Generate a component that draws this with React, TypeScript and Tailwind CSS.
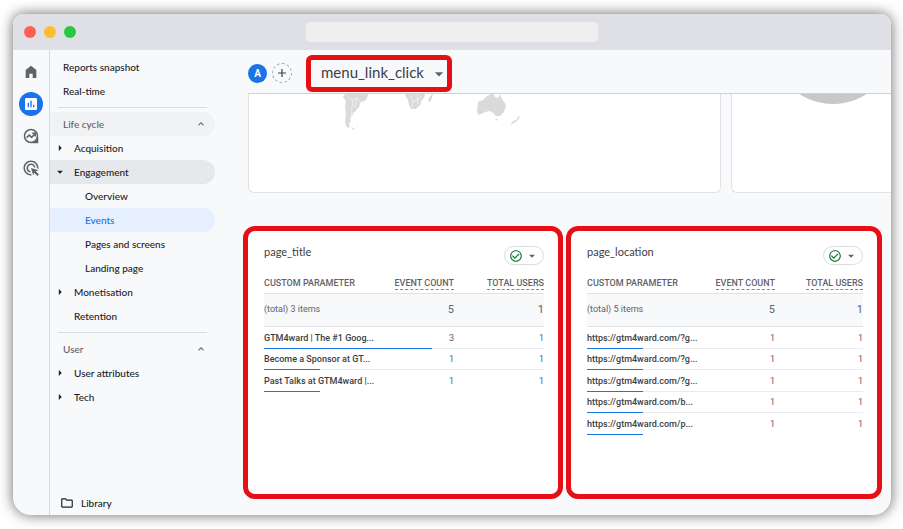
import { MdAdsClick, MdArrowDropDown, MdArrowRight, MdCheckCircleOutline, MdExpandLess, MdInsertChart, MdOutlineFolder } from "react-icons/md";

type Row = { label: string; count: number; users: number };

const lifeCycle = [
    { label: "Acquisition", kind: "closed" },
    { label: "Engagement", kind: "open" },
    { label: "Overview", kind: "child" },
    { label: "Events", kind: "active" },
    { label: "Pages and screens", kind: "child" },
    { label: "Landing page", kind: "child" },
    { label: "Monetisation", kind: "closed" },
    { label: "Retention", kind: "plain" },
];

const userItems = [
    { label: "User attributes", kind: "closed" },
    { label: "Tech", kind: "closed" },
];

const titleRows: Row[] = [
    { label: "GTM4ward | The #1 Goog...", count: 3, users: 1 },
    { label: "Become a Sponsor at GT...", count: 1, users: 1 },
    { label: "Past Talks at GTM4ward |...", count: 1, users: 1 },
];

const locationRows: Row[] = [
    { label: "https://gtm4ward.com/?g...", count: 1, users: 1 },
    { label: "https://gtm4ward.com/?g...", count: 1, users: 1 },
    { label: "https://gtm4ward.com/?g...", count: 1, users: 1 },
    { label: "https://gtm4ward.com/b...", count: 1, users: 1 },
    { label: "https://gtm4ward.com/p...", count: 1, users: 1 },
];

const rowStyles: Record<string, string> = {
    closed: "pl-6",
    open: "pl-6 bg-[#e6e8eb]",
    plain: "pl-6",
    child: "pl-[35px]",
    active: "pl-[35px] bg-[#e5effd] text-[#1a73e8]",
};

function NavItem({ label, kind }: { label: string; kind: string }) {
    return (
        <a href="#" className={`relative flex h-6 items-center rounded-r-full ${rowStyles[kind]}`}>
            {kind === "closed" && <MdArrowRight className="absolute left-[3px] size-3.5" />}
            {kind === "open" && <MdArrowDropDown className="absolute left-[3px] size-3.5" />}
            {label}
        </a>
    );
}

function NavGroup({ label, shaded, items }: { label: string; shaded?: boolean; items: { label: string; kind: string }[] }) {
    return (
        <div>
            <button className={`flex h-6 w-full items-center justify-between rounded-r-full pl-[13px] pr-2 text-[#5f6368] ${shaded ? "bg-[#f1f2f4]" : ""}`}>
                {label}
                <MdExpandLess className="size-3" />
            </button>
            {items.map((item) => (
                <NavItem key={item.label} {...item} />
            ))}
        </div>
    );
}

function Rail() {
    return (
        <nav aria-label="Main" className="flex w-[37px] shrink-0 flex-col items-center gap-2 border-r border-[#d5d7da] pt-2.5 text-[#5f6368]">
            <a href="#" aria-label="Home" className="flex size-6 items-center justify-center">
                <svg viewBox="0 0 24 24" className="size-4" fill="currentColor">
                    <path d="M4 21V9l8-6.5L20 9v12h-5.5v-6.5h-5V21z" />
                </svg>
            </a>
            <a href="#" aria-label="Reports" className="flex size-6 items-center justify-center rounded-full bg-[#1a73e8] text-white">
                <MdInsertChart className="size-4" />
            </a>
            <a href="#" aria-label="Explore" className="flex size-6 items-center justify-center">
                <svg viewBox="0 0 24 24" className="size-4" fill="none" stroke="currentColor" strokeWidth="2.3">
                    <circle cx="12" cy="12" r="9.8" />
                    <path d="M21.8 14v7.8H14c4-.6 7-3.600 7.800-7.800z" fill="currentColor" />
                    <path d="M5.500 14.500l4-4 3.500 3.500 5-5.500M13.800 8h4.600v4.600" />
                </svg>
            </a>
            <a href="#" aria-label="Advertising" className="flex size-6 items-center justify-center">
                <MdAdsClick className="size-[18px]" />
            </a>
        </nav>
    );
}

function Sidebar() {
    return (
        <nav aria-label="Reports" className="flex w-[165px] shrink-0 flex-col pt-[5px] font-['Lato',sans-serif] text-[10px] font-medium leading-3 text-[#202124]">
            <a href="#" className="flex h-6 items-center pl-[13px]">Reports snapshot</a>
            <a href="#" className="flex h-6 items-center pl-[13px]">Real-time</a>
            <hr className="mx-2 my-1 border-[#dadce0]" />
            <NavGroup label="Life cycle" shaded items={lifeCycle} />
            <hr className="mx-2 my-1 border-[#dadce0]" />
            <NavGroup label="User" items={userItems} />
            <a href="#" className="mt-auto flex h-6 items-center gap-[7px] pl-2.5">
                <MdOutlineFolder className="size-3.5" />
                Library
            </a>
        </nav>
    );
}

function WorldMap() {
    return (
        <svg viewBox="340 93 190 40" className="ml-[91px] h-10 w-[190px]" fill="#dadada" role="img" aria-label="World map">
            <path d="M345 93h23l-1 4-2 3-4 1-1 4-3 3-2 3-2 1-1 4-2 1 1 3-2 3 1 3-2 1-2-2-1-5 1-7-1-7 1-6-3-4z" />
            <path d="M351 126l4 2-2 1zM356 125l2-1v1z" />
            <path d="M405 93h20l-1 4-3 3v3l-3 3-2 2h-5l-2-4-1-5-2-3z" />
            <path d="M430 95l3-2-1 4-2 4-2-1z" />
            <path d="M478 101l5-2 4-4 4-2h3l1 3 3 1 2-4 2 5 3 4 1 3-2 6-4 4h-4l-3-3-3-2-5 1-4 2-3 1-1-5z" />
            <path d="M495 118h3l-1 2zM518 115l2 1-3 4-5 3-2 1 2-3 5-3zM516 100h1v1zM526 97h1v1zM442 122h1v1z" />
            <path d="M348 96l5 3 4-2 4 5-2 3M353 99l-1 8-1 14M357 97l-2 10M410 94l3 6 5-1 4-5M413 100l-1 6M417 93l1 10" fill="none" stroke="white" strokeWidth="0.6" />
        </svg>
    );
}

function ParameterCard({ title, rows }: { title: string; rows: Row[] }) {
    const total = rows.reduce((sum, row) => sum + row.count, 0);
    return (
        <section className="h-[273px] rounded-xl border-5 border-[#e60f14] bg-white pl-4 pr-3.5 pt-[15px]">
            <div className="flex h-[19px] items-start justify-between">
                <h2 className="font-['Lato',sans-serif] text-[11px] leading-3 text-[#3c4043]">{title}</h2>
                <button aria-label={`${title} data quality`} className="flex h-[19px] w-10 items-center justify-between rounded-full border border-[#dadce0] px-1">
                    <MdCheckCircleOutline className="size-3.5 text-[#137333]" />
                    <MdArrowDropDown className="size-3.5 text-[#5f6368]" />
                </button>
            </div>
            <table className="mt-2 w-full table-fixed border-separate border-spacing-0 text-[#5f6368]">
                <thead>
                    <tr className="h-[21px] text-[9px] leading-3 *:border-b *:border-[#dfe1e5]">
                        <th className="w-[100px] whitespace-nowrap p-0 text-left font-medium">CUSTOM PARAMETER</th>
                        <th className="p-0 text-right font-medium">
                            <span className="border-b border-dashed border-[#80868b] pb-px">EVENT COUNT</span>
                        </th>
                        <th className="p-0 text-right font-medium">
                            <span className="border-b border-dashed border-[#80868b] pb-px">TOTAL USERS</span>
                        </th>
                    </tr>
                </thead>
                <tbody>
                    <tr className="h-[33px] bg-[#f8f9fa] text-[11px] *:border-b *:border-[#dfe1e5]">
                        <td className="p-0 text-[9px]">(total) {rows.length} items</td>
                        <td className="p-0 text-right">{total}</td>
                        <td className="p-0 text-right">1</td>
                    </tr>
                    {rows.map((row, index) => (
                        <tr key={index} className="h-[21px] text-[9px] leading-3 *:border-b *:border-[#e8eaed] last:*:border-transparent even:h-[22px]">
                            <td className="relative whitespace-nowrap p-0 font-medium text-[#3c4043]">
                                {row.label}
                                <span
                                    className="absolute -bottom-px left-0 h-px bg-[#1a73e8]"
                                    style={{ width: row.count * 56 }}
                                />
                            </td>
                            <td className="p-0 text-right">{row.count}</td>
                            <td className="p-0 text-right">{row.users}</td>
                        </tr>
                    ))}
                </tbody>
            </table>
        </section>
    );
}

function Toolbar() {
    return (
        <header className="flex h-11 shrink-0 items-center border-b border-[#d0d2d5] pr-3 pt-[3px]">
            <span className="flex size-[19px] items-center justify-center rounded-full bg-[#1a73e8] text-[10px] font-bold text-white">A</span>
            <button aria-label="Add comparison" className="ml-[5px] flex size-5 items-center justify-center rounded-full border border-dashed border-[#9aa0a6] text-[#3c4043]">
                <svg viewBox="0 0 10 10" className="size-2.5" stroke="currentColor" strokeWidth="1.2">
                    <path d="M5 1v8M1 5h8" />
                </svg>
            </button>
            <div className="relative ml-3.5 h-[37px] w-[146px] rounded-md border-5 border-[#e60f14]">
                <select aria-label="Event name" className="h-full w-full appearance-none bg-transparent pb-0.5 pl-2.5 font-['Lato',sans-serif] text-[15px] text-[#3c4043] outline-none">
                    <option>menu_link_click</option>
                </select>
                <MdArrowDropDown className="pointer-events-none absolute -right-0.5 top-1 size-5 text-[#5f6368]" />
            </div>
        </header>
    );
}

export default function App() {
    return (
        <div className="flex h-screen flex-col bg-white px-3 pb-3.5 pl-[13px] pt-3.5 font-['Roboto',sans-serif]">
            <div className="flex flex-1 flex-col overflow-hidden rounded-b-[18px] rounded-t-[10px] bg-[#f8f9fb] shadow-[0_0_14px_rgba(0,0,0,0.6)]">
                {/* Browser bar */}
                <div className="grid h-9 shrink-0 grid-cols-3 items-center bg-[#dfe0e5]">
                    <div className="flex gap-2 pl-[11px]">
                        <span className="size-3 rounded-full bg-[#ff5f57]" />
                        <span className="size-3 rounded-full bg-[#febc2e]" />
                        <span className="size-3 rounded-full bg-[#28c840]" />
                    </div>
                    <div className="h-5 rounded bg-[#efeff0]" />
                </div>

                <div className="flex min-h-0 flex-1">
                    <Rail />
                    <Sidebar />
                    <main className="flex min-w-0 flex-1 flex-col">
                        <div className="pl-[33px]">
                            <Toolbar />
                            <div className="flex gap-2.5">
                                <div className="h-[99px] w-[473px] shrink-0 rounded-b-md border border-t-0 border-[#e0e2e5] bg-white">
                                    <WorldMap />
                                </div>
                                <div className="h-[99px] min-w-0 flex-1 rounded-bl-md border-b border-l border-[#e0e2e5] bg-white">
                                    <svg viewBox="0 0 140 12" className="ml-[31px] h-3 w-[140px] max-w-none" role="img" aria-label="Chart">
                                        <circle cx="70" cy="-52" r="62" fill="#c8c8c8" />
                                    </svg>
                                </div>
                            </div>
                        </div>
                        <div className="mt-[33px] grid grid-cols-[320fr_316fr] gap-[3px] pl-7 pr-[9px]">
                            <ParameterCard title="page_title" rows={titleRows} />
                            <ParameterCard title="page_location" rows={locationRows} />
                        </div>
                    </main>
                </div>
            </div>
        </div>
    );
}
